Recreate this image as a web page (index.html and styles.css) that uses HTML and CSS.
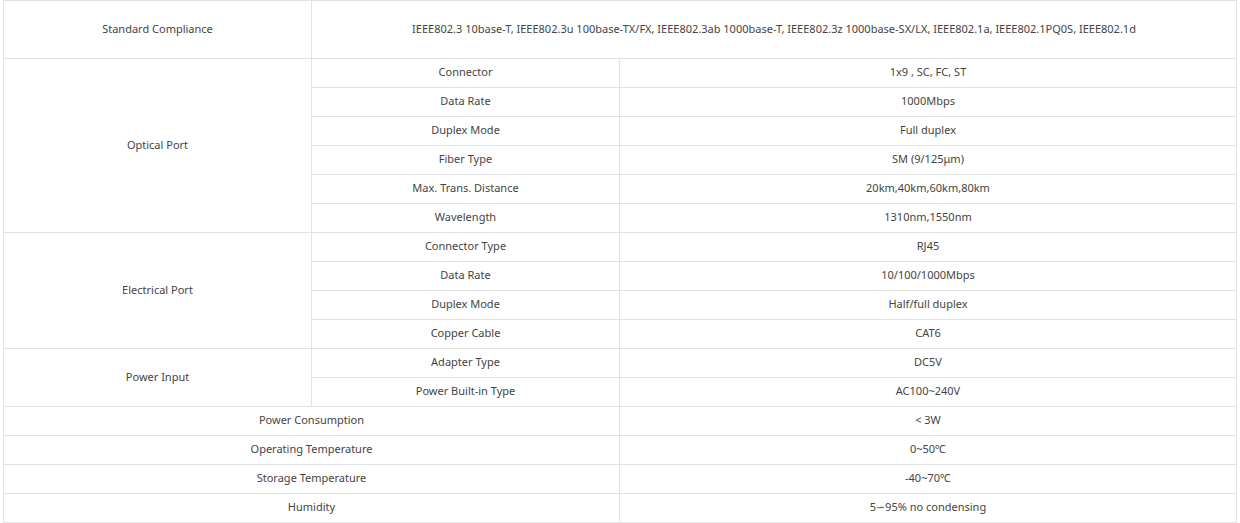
FILE: index.html
```html
<!DOCTYPE html>
<html>
<head>
<meta charset="utf-8">
<link rel="stylesheet" href="styles.css">
</head>
<body>
<table class="spec">
<colgroup><col class="c1"><col class="c2"><col class="c3"></colgroup>
<tbody>
<tr class="tall"><td>Standard Compliance</td><td colspan="2">IEEE802.3 10base-T, IEEE802.3u 100base-TX/FX, IEEE802.3ab 1000base-T, IEEE802.3z 1000base-SX/LX, IEEE802.1a, IEEE802.1PQ0S, IEEE802.1d</td></tr>
<tr><td rowspan="6">Optical Port</td><td>Connector</td><td>1x9 , SC, FC, ST</td></tr>
<tr><td>Data Rate</td><td>1000Mbps</td></tr>
<tr><td>Duplex Mode</td><td>Full duplex</td></tr>
<tr><td>Fiber Type</td><td>SM (9/125μm)</td></tr>
<tr><td>Max. Trans. Distance</td><td>20km,40km,60km,80km</td></tr>
<tr><td>Wavelength</td><td>1310nm,1550nm</td></tr>
<tr><td rowspan="4">Electrical Port</td><td>Connector Type</td><td>RJ45</td></tr>
<tr><td>Data Rate</td><td>10/100/1000Mbps</td></tr>
<tr><td>Duplex Mode</td><td>Half/full duplex</td></tr>
<tr><td>Copper Cable</td><td>CAT6</td></tr>
<tr><td rowspan="2">Power Input</td><td>Adapter Type</td><td>DC5V</td></tr>
<tr><td>Power Built-in Type</td><td>AC100~240V</td></tr>
<tr><td colspan="2">Power Consumption</td><td>&lt; 3W</td></tr>
<tr><td colspan="2">Operating Temperature</td><td>0~50℃</td></tr>
<tr><td colspan="2">Storage Temperature</td><td>-40~70℃</td></tr>
<tr><td colspan="2">Humidity</td><td>5∽95% no condensing</td></tr>
</tbody>
</table>
</body>
</html>
```
FILE: styles.css
```css
html, body {
  margin: 0;
  padding: 0;
  background: #fff;
}
body {
  padding-left: 3px;
  font-family: "Noto Sans", "Open Sans", sans-serif;
  font-size: 11px;
  color: #444;
}
.spec {
  border-collapse: collapse;
  table-layout: fixed;
  width: 1233px;
}
.c1 { width: 308px; }
.c2 { width: 308px; }
.c3 { width: 617px; }
.spec td {
  border: 1px solid #e3e3e3;
  text-align: center;
  vertical-align: middle;
  padding: 0 4px 2px;
  height: 26px;
  line-height: 14px;
}
.spec tr.tall td {
  height: 55px;
}
```
